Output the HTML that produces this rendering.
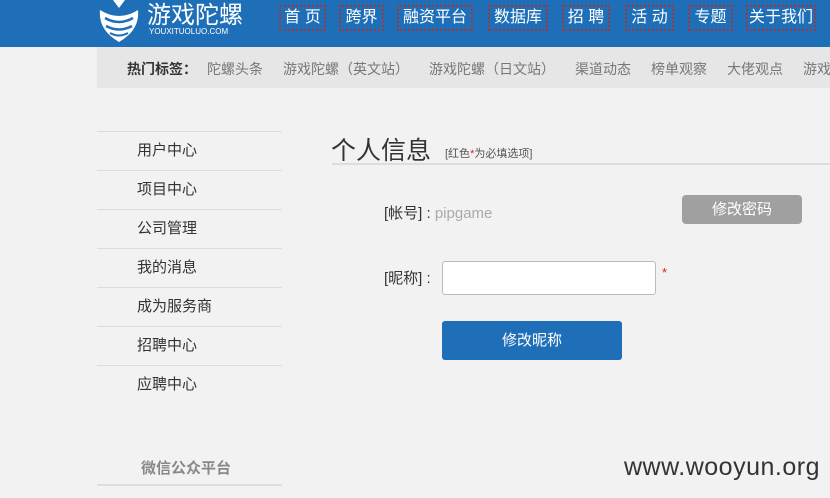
<!DOCTYPE html>
<html><head><meta charset="utf-8"><style>
*{margin:0;padding:0;box-sizing:border-box}
body{width:830px;height:498px;background:#f2f2f2;font-family:"Liberation Sans","Noto Sans CJK SC",sans-serif;position:relative;overflow:hidden;color:#333}
.a{position:absolute;white-space:nowrap}
.hdr{position:absolute;left:0;top:0;width:830px;height:47px;background:#1f6fb8}
.nav{position:absolute;top:5px;height:26px;border:2px dotted #a33;color:#fff;font-size:16px;line-height:21px;text-align:center;white-space:nowrap;overflow:hidden}
.bar{position:absolute;left:97px;top:47px;width:733px;height:41px;background:#e6e6e6;overflow:hidden}
.tag{position:absolute;top:12px;font-size:14px;color:#777;white-space:nowrap}
.sl{position:absolute;left:97px;width:185px;height:1px;background:#ddd}
.si{position:absolute;left:137px;font-size:15px;color:#333}
</style></head><body>
<div class="hdr"></div>
<svg class="a" style="left:96px;top:0" width="46" height="44" viewBox="0 0 46 44">
<path d="M4 10 Q23 22 42 10 Q44 30 23 42 Q2 30 4 10Z" fill="#fff"/>
<path d="M9 18 Q23 26 37 18" stroke="#1f6fb8" stroke-width="2.5" fill="none"/>
<path d="M10 26 Q23 33 36 26" stroke="#1f6fb8" stroke-width="2.5" fill="none"/>
<path d="M14 33 Q23 38 32 33" stroke="#1f6fb8" stroke-width="2" fill="none"/>
<path d="M17 0 L23 8 L29 0Z" fill="#fff"/>
</svg>
<div class="a" style="left:147px;top:1px;font-size:24px;line-height:30px;color:#fff">游戏陀螺</div>
<div class="a" style="left:149px;top:27px;font-size:8px;line-height:9px;color:#fff">YOUXITUOLUO.COM</div>
<div class="nav" style="left:279px;width:47px">首 页</div>
<div class="nav" style="left:339px;width:45px">跨界</div>
<div class="nav" style="left:397px;width:76px">融资平台</div>
<div class="nav" style="left:488px;width:60px">数据库</div>
<div class="nav" style="left:562px;width:48px">招 聘</div>
<div class="nav" style="left:625px;width:49px">活 动</div>
<div class="nav" style="left:688px;width:45px">专题</div>
<div class="nav" style="left:746px;width:70px">关于我们</div>
<div class="bar">
<div class="tag" style="left:30px;color:#333;font-weight:bold">热门标签：</div>
<div class="tag" style="left:110px">陀螺头条</div>
<div class="tag" style="left:186px">游戏陀螺（英文站）</div>
<div class="tag" style="left:332px">游戏陀螺（日文站）</div>
<div class="tag" style="left:478px">渠道动态</div>
<div class="tag" style="left:554px">榜单观察</div>
<div class="tag" style="left:630px">大佬观点</div>
<div class="tag" style="left:706px">游戏陀螺</div>
</div>
<div class="sl" style="top:131px"></div><div class="si" style="top:139px">用户中心</div>
<div class="sl" style="top:170px"></div><div class="si" style="top:178px">项目中心</div>
<div class="sl" style="top:209px"></div><div class="si" style="top:217px">公司管理</div>
<div class="sl" style="top:248px"></div><div class="si" style="top:256px">我的消息</div>
<div class="sl" style="top:287px"></div><div class="si" style="top:295px">成为服务商</div>
<div class="sl" style="top:326px"></div><div class="si" style="top:334px">招聘中心</div>
<div class="sl" style="top:365px"></div><div class="si" style="top:373px">应聘中心</div>
<div class="si" style="left:141px;top:457px;font-weight:bold;color:#888">微信公众平台</div>
<div class="sl" style="top:484px;height:2px"></div>
<div class="a" style="left:331px;top:131px;font-size:25px;color:#333">个人信息</div>
<div class="a" style="left:445px;top:145px;font-size:11px;color:#555">[红色<span style="color:#d22">*</span>为必填选项]</div>
<div class="a" style="left:332px;top:163px;width:498px;height:2px;background:#ddd"></div>
<div class="a" style="left:384px;top:202px;font-size:15px;color:#333">[帐号] : <span style="color:#aaa">pipgame</span></div>
<div class="a" style="left:682px;top:195px;width:120px;height:29px;background:#a0a0a0;border-radius:4px;color:#fff;font-size:15px;line-height:29px;text-align:center">修改密码</div>
<div class="a" style="left:384px;top:267px;font-size:15px;color:#333">[昵称] :</div>
<div class="a" style="left:442px;top:261px;width:214px;height:34px;background:#fff;border:1px solid #bbb;border-radius:3px"></div>
<div class="a" style="left:662px;top:265px;font-size:13px;color:#d22">*</div>
<div class="a" style="left:442px;top:321px;width:180px;height:39px;background:#1f6fb8;border-radius:3px;color:#fff;font-size:15px;line-height:39px;text-align:center">修改昵称</div>
<div class="a" style="left:624px;top:453px;font-size:25px;letter-spacing:0.5px;color:#333">www.wooyun.org</div>
</body></html>
